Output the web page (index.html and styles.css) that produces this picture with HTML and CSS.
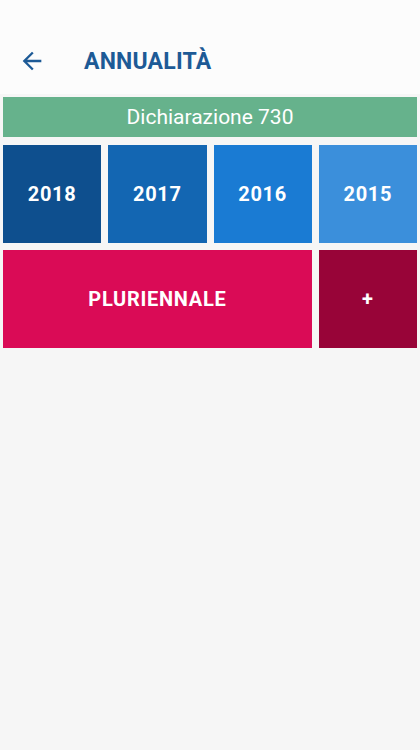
FILE: index.html
```html
<!DOCTYPE html>
<html lang="it">
<head>
    <meta charset="UTF-8">
    <meta name="viewport" content="width=device-width, initial-scale=1.0">
    <title>Annualità</title>
    <link rel="stylesheet" href="styles.css">
</head>
<body>

    <header class="toolbar">
        <button class="back" aria-label="Indietro">
            <svg width="28" height="28" viewBox="0 0 24 24">
                <path d="M20 11H7.83l5.59-5.59L12 4l-8 8 8 8 1.41-1.41L7.83 13H20v-2z" fill="#1d5a96"/>
            </svg>
        </button>
        <h1>ANNUALITÀ</h1>
    </header>

    <main class="content">
        <div class="banner">Dichiarazione 730</div>

        <div class="grid">
            <a class="tile y2018" href="#">2018</a>
            <a class="tile y2017" href="#">2017</a>
            <a class="tile y2016" href="#">2016</a>
            <a class="tile y2015" href="#">2015</a>
            <a class="tile multi" href="#">PLURIENNALE</a>
            <a class="tile more" href="#">+</a>
        </div>
    </main>

</body>
</html>
```

FILE: styles.css
```css
body {
    font-family: Roboto, 'Noto Sans', sans-serif;
    margin: 0;
    padding: 0;
    background-color: #f6f6f6;
    min-height: 750px;
}

.toolbar {
    background-color: #fcfcfc;
    height: 94px;
    display: flex;
    align-items: center;
    padding-top: 28px;
    box-sizing: border-box;
}

.back {
    background: none;
    border: none;
    padding: 0;
    margin-left: 18px;
    width: 28px;
    height: 28px;
    cursor: pointer;
}

.back svg {
    display: block;
}

.toolbar h1 {
    margin: 0 0 0 38px;
    font-size: 23px;
    font-weight: 700;
    color: #1d5a96;
    letter-spacing: 0.2px;
}

.content {
    padding: 3px 3px;
}

.banner {
    background-color: #66b28c;
    color: #fff;
    height: 40px;
    display: flex;
    align-items: center;
    justify-content: center;
    font-size: 21px;
}

.grid {
    display: grid;
    grid-template-columns: repeat(4, 1fr);
    grid-auto-rows: 98px;
    gap: 7px;
    margin-top: 8px;
}

.tile {
    display: flex;
    align-items: center;
    justify-content: center;
    color: #fff;
    font-size: 20px;
    font-weight: 700;
    letter-spacing: 0.7px;
    text-decoration: none;
}

.y2018 { background-color: #0e4f8e; }
.y2017 { background-color: #1366b2; }
.y2016 { background-color: #1a7bd3; }
.y2015 { background-color: #3b8fdb; }

.multi {
    grid-column: span 3;
    background-color: #da0b56;
}

.more {
    background-color: #980438;
}
```
